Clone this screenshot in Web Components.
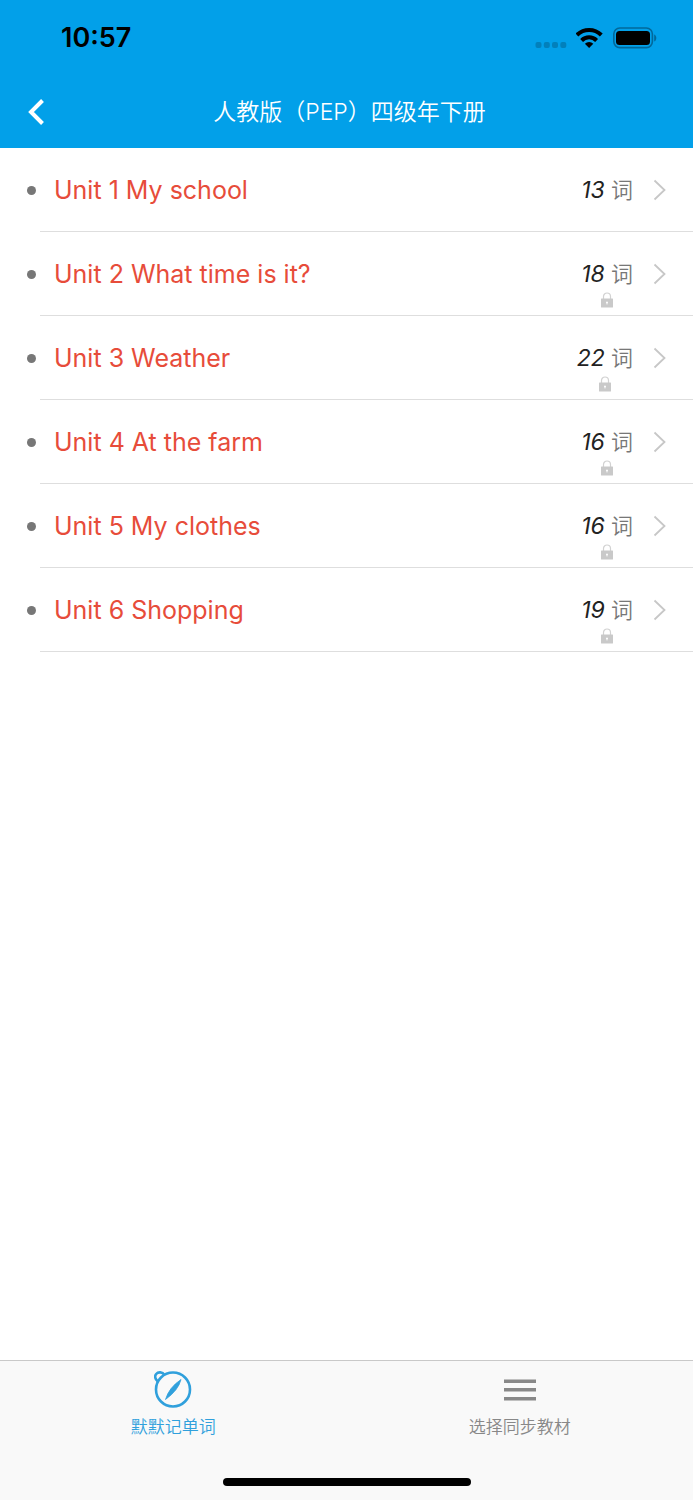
<!DOCTYPE html>
<html lang="zh-CN">
<head>
<meta charset="utf-8">
<meta name="viewport" content="width=device-width, initial-scale=1">
<title>人教版（PEP）四级年下册</title>
<style>
  body { margin: 0; background: #fff; font-family: Inter, "Noto Sans CJK SC", sans-serif; font-weight: 350; }
</style>
</head>
<body>
<word-app>
  <status-bar slot="header" time="10:57"></status-bar>
  <nav-header slot="header">人教版（PEP）四级年下册</nav-header>
  <unit-row count="13">Unit 1 My school</unit-row>
  <unit-row count="18" locked>Unit 2 What time is it?</unit-row>
  <unit-row count="22" locked>Unit 3 Weather</unit-row>
  <unit-row count="16" locked>Unit 4 At the farm</unit-row>
  <unit-row count="16" locked>Unit 5 My clothes</unit-row>
  <unit-row count="19" locked>Unit 6 Shopping</unit-row>
  <tab-bar slot="footer">
    <tab-item active>
      <svg slot="icon" width="38" height="38" viewBox="0 0 38 38" fill="none" stroke="currentColor">
        <circle cx="19" cy="19.500" r="17" stroke-width="2.600"/>
        <path d="M3.800 11.500C0.800 9 0.500 6 2.200 4C4.200 1.600 8.500 1.700 10.500 5" stroke-width="2.600"/>
        <path d="M27 9.500Q24.500 20 11.500 29.500Q15 17.500 27 9.500Z" fill="currentColor" stroke-width="0.800"/>
      </svg>
      默默记单词
    </tab-item>
    <tab-item>
      <svg slot="icon" width="38" height="38" viewBox="0 0 38 38" fill="currentColor">
        <path d="M3 9.500h32v3.500H3zM3 18h32v3.500H3zM3 27h32v3.500H3z"/>
      </svg>
      选择同步教材
    </tab-item>
  </tab-bar>
</word-app>

<script>
  class BaseElement extends HTMLElement {
    connectedCallback() {
      if (!this.shadowRoot) this.attachShadow({ mode: "open" }).innerHTML = this.render();
    }
  }

  customElements.define("word-app", class extends BaseElement {
    render() {
      return `
        <style>
          :host { display: flex; flex-direction: column; min-height: 100vh; }
          header { background: #02a0e9; }
          main { flex: 1; }
        </style>
        <header><slot name="header"></slot></header>
        <main><slot></slot></main>
        <slot name="footer"></slot>`;
    }
  });

  customElements.define("status-bar", class extends BaseElement {
    render() {
      return `
        <style>
          :host { display: flex; align-items: center; justify-content: space-between;
                  height: 76px; padding: 0 36px 0 61px; color: #000; }
          time { font-size: 27px; font-weight: 600; line-height: 32px; }
          div { display: flex; align-items: center; gap: 9px; }
        </style>
        <time>${this.getAttribute("time")}</time>
        <div>
          <svg width="32" height="22" viewBox="0 0 32 22" fill="#0280bb">
            <rect x="0.500" y="15" width="6" height="6" rx="2"/>
            <rect x="8.800" y="15" width="6" height="6" rx="2"/>
            <rect x="17" y="15" width="6" height="6" rx="2"/>
            <rect x="25.300" y="15" width="6" height="6" rx="2"/>
          </svg>
          <svg width="28" height="22" viewBox="0 0 28 22" fill="none" stroke="#000" stroke-width="4">
            <path d="M0.900 8A17.300 17.300 0 0 1 25.300 8"/>
            <path d="M5.600 13.500A10.500 10.500 0 0 1 20.600 13.500"/>
            <path d="M13.100 21L8.900 16.800A6 6 0 0 1 17.300 16.800Z" fill="#000" stroke="none"/>
          </svg>
          <svg width="44" height="22" viewBox="0 0 44 22">
            <rect x="0.800" y="1" width="38.600" height="19.600" rx="6" fill="none" stroke="#02689a" stroke-width="1.600"/>
            <rect x="3" y="4" width="34" height="14" rx="3.500"/>
            <path d="M41.200 7.500C44 8.500 44 13.500 41.200 14.500Z" fill="#02689a"/>
          </svg>
        </div>`;
    }
  });

  customElements.define("nav-header", class extends BaseElement {
    render() {
      return `
        <style>
          :host { display: grid; grid-template-columns: 72px 1fr 66px; align-items: center;
                  height: 71px; padding-bottom: 1px; color: #fff; }
          button { display: flex; justify-content: center; padding: 16px 0; border: 0;
                   background: none; color: inherit; }
          h1 { margin: 0; font-size: 23px; font-weight: inherit; line-height: 32px; text-align: center; }
        </style>
        <button type="button" aria-label="返回">
          <svg width="16" height="28" viewBox="0 0 16 28" fill="none" stroke="currentColor" stroke-width="4">
            <path d="M14.500 2.500L3 14L14.500 25.500"/>
          </svg>
        </button>
        <h1><slot></slot></h1>`;
    }
  });

  customElements.define("unit-row", class extends BaseElement {
    render() {
      const lock = this.hasAttribute("locked") ? `
        <svg width="14" height="16" viewBox="0 0 14 16" role="img" aria-label="未解锁">
          <path d="M3.500 7V4.500a3.500 3.500 0 0 1 7 0V7" fill="none" stroke="#d2d2d2" stroke-width="1.200"/>
          <rect x="1" y="6.500" width="12" height="9" rx="0.500" fill="#c9c9c9"/>
          <path d="M7 9.500a1 1 0 0 1 .4 1.900v1.200h-.8v-1.200A1 1 0 0 1 7 9.500Z" fill="#fff"/>
        </svg>` : "";
      return `
        <style>
          :host { display: block; }
          a { display: flex; height: 84px; color: #e74c3a; text-decoration: none; line-height: 32px; }
          .mark { display: flex; align-items: center; justify-content: flex-end; width: 40px; }
          .mark::before { content: ""; width: 9px; height: 9px; margin-right: 4px; border-radius: 50%; background: #777; }
          .body { flex: 1; display: flex; justify-content: space-between; box-sizing: border-box;
                  padding: 26px 27px 0 14px; border-bottom: 1px solid #dedede; }
          .name { font-size: 25px; font-weight: 400; }
          .side { display: flex; gap: 20px; }
          .count { display: flex; flex-direction: column; align-items: center; gap: 2px;
                   font-size: 22px; color: #777; }
          em { font-size: 23px; font-weight: 400; color: #222; }
          .arrow { margin-top: 5px; }
        </style>
        <a href="#">
          <span class="mark"></span>
          <span class="body">
            <span class="name"><slot></slot></span>
            <span class="side">
              <span class="count"><span><em>${this.getAttribute("count")}</em> 词</span>${lock}</span>
              <svg class="arrow" width="13" height="22" viewBox="0 0 13 22" fill="none" stroke="#c7c7c7" stroke-width="1.800">
                <path d="M1.500 1.500L11.500 11L1.500 20.500"/>
              </svg>
            </span>
          </span>
        </a>`;
    }
  });

  customElements.define("tab-bar", class extends BaseElement {
    render() {
      return `
        <style>
          :host { display: block; background: #f9f9f9; border-top: 1px solid #c9c9c9; }
          nav { display: flex; }
          .home { width: 248px; height: 8px; margin: 39px auto 14px; border-radius: 4px; background: #000; }
        </style>
        <nav><slot></slot></nav>
        <div class="home"></div>`;
    }
  });

  customElements.define("tab-item", class extends BaseElement {
    render() {
      return `
        <style>
          :host { flex: 1; color: #888; }
          :host([active]) { color: #30a0dc; }
          a { display: flex; flex-direction: column; align-items: center; gap: 7px; padding-top: 9px;
              color: inherit; text-decoration: none; font-size: 17px; line-height: 24px; }
        </style>
        <a href="#"><slot name="icon"></slot><span><slot></slot></span></a>`;
    }
  });
</script>
</body>
</html>
